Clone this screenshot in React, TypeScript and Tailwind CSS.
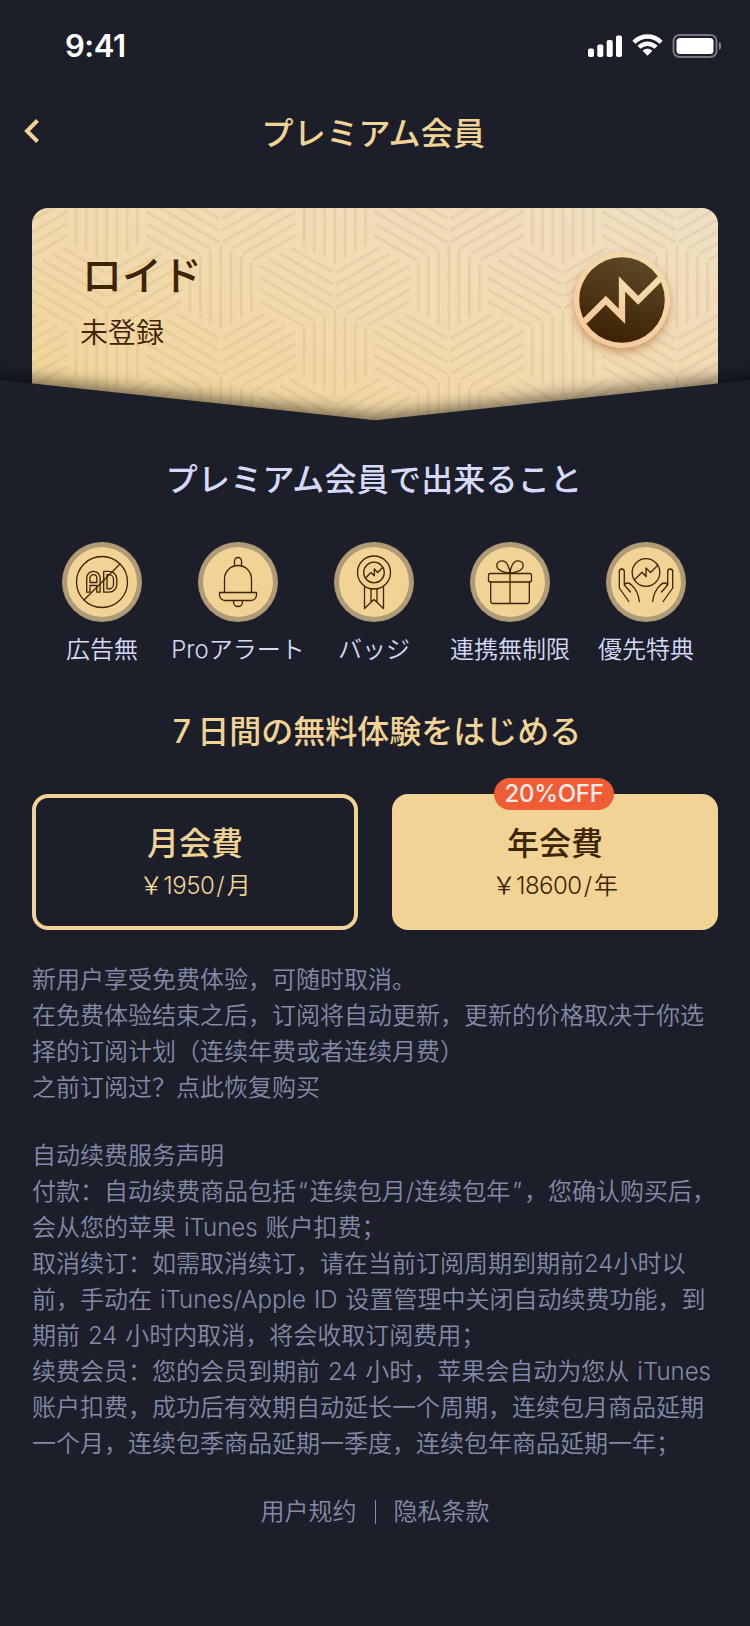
import type { ReactNode } from "react";

const INK = "#3d2402";

const COL = 114.05;
const ROW = 131.7;
const LINES = [-3, -2, -1, 0, 1, 2, 3];

function Weave() {
  const blocks: ReactNode[] = [];
  for (let c = -1; c <= 6; c++) {
    for (let r = -1; r <= 3; r++) {
      const x = 74.7 + c * COL;
      const y = -30.8 + r * ROW + (c % 2 === 0 ? 0 : ROW / 2);
      for (const angle of [0, 120, 240]) {
        for (const i of LINES) {
          const half = 42.4 - Math.abs(i) * 5.9;
          blocks.push(
            <line
              key={`${c}:${r}:${angle}:${i}`}
              x1={i * 10.23}
              x2={i * 10.23}
              y1={44 - half}
              y2={44 + half}
              transform={`translate(${x} ${y}) rotate(${angle})`}
            />,
          );
        }
      }
    }
  }
  return (
    <svg className="absolute inset-0 h-full w-full" viewBox="0 0 686 222" stroke="#cdb276" strokeOpacity="0.27" strokeWidth="2.6">
      {blocks}
    </svg>
  );
}

function StatusBar() {
  return (
    <div className="flex h-[88px] items-center justify-between pt-[2px] pr-[29px] pl-[65px]">
      <span className="pt-[2px] font-['Inter'] text-[31px] font-semibold tracking-[-0.5px] text-white">9:41</span>
      <svg className="h-[26px] w-[134px]" viewBox="587 32 134 26" fill="#fff">
        <rect x="588" y="48.500" width="6" height="8.500" rx="1.8" />
        <rect x="597.3" y="44.500" width="6" height="12.500" rx="1.8" />
        <rect x="606.7" y="40" width="6" height="17" rx="1.8" />
        <rect x="616" y="35.5" width="6" height="21.5" rx="1.8" />
        <path d="M647.500 38.800c4.400 0 8.500 1.700 11.600 4.700.2.200.6.200.8 0l2.300-2.300c.3-.3.3-.7 0-1-8.200-7.800-21.200-7.800-29.400 0-.3.300-.3.700 0 1l2.300 2.300c.2.200.6.200.8 0 3.100-3 7.200-4.700 11.600-4.700z" />
        <path d="M647.500 46.100c2.400 0 4.700.9 6.500 2.500.2.200.6.200.8 0l2.300-2.300c.3-.3.3-.7 0-1-5.400-5.100-13.800-5.100-19.200 0-.3.300-.3.700 0 1l2.300 2.300c.2.200.6.200.8 0 1.800-1.600 4.100-2.500 6.500-2.500z" />
        <path d="M652 51.300c.3-.3.3-.7 0-1-2.600-2.200-6.400-2.200-9 0-.3.300-.3.700 0 1l4 4c.3.300.7.300 1 0z" />
        <rect x="673.500" y="35" width="43" height="22" rx="6" fill="none" stroke="#fff" strokeOpacity=".4" strokeWidth="2" />
        <rect x="676.500" y="38" width="37" height="16" rx="3.500" />
        <path d="M719 42v8c1.600-.7 2.400-2.200 2.400-4s-.8-3.300-2.400-4z" opacity=".45" />
      </svg>
    </div>
  );
}

function Emblem() {
  return (
    <svg className="absolute top-[28px] right-[32px] h-[128px] w-[128px]" viewBox="0 0 128 128">
      <defs>
        <linearGradient id="ring" x1=".7" y1="0" x2=".3" y2="1">
          <stop offset="0" stopColor="#f4dcab" />
          <stop offset="1" stopColor="#f5ca9c" />
        </linearGradient>
        <linearGradient id="disc" x1=".7" y1="0" x2=".4" y2="1">
          <stop offset="0" stopColor="#5c4a26" />
          <stop offset=".45" stopColor="#4f3717" />
          <stop offset="1" stopColor="#3d2103" />
        </linearGradient>
        <filter id="drop" x="-30%" y="-30%" width="160%" height="160%" colorInterpolationFilters="sRGB">
          <feDropShadow dx="0" dy="4" stdDeviation="4" floodColor="#a05a28" floodOpacity=".5" />
        </filter>
      </defs>
      <circle cx="64" cy="64" r="48" fill="url(#ring)" filter="url(#drop)" />
      <circle cx="64" cy="64" r="42.800" fill="url(#disc)" />
      <path d="M26.500 85.500 47.800 64.300 64 80.500V48L80.200 64.300 101.800 42.700" fill="none" stroke="url(#ring)" strokeWidth="6.300" />
    </svg>
  );
}

function MemberCard() {
  return (
    <div className="relative h-[222px]">
      <div className="relative mx-8 h-[222px] overflow-hidden rounded-t-2xl bg-[linear-gradient(18deg,#f1d59b_10%,#f2dab3_60%,#f0dfc4_95%)]">
        <Weave />
        <div className="relative flex flex-col pt-[37px] pl-[48px] text-[#3d2402]">
          <span className="pl-[2px] text-[40px] leading-[56px] font-medium">ロイド</span>
          <span className="mt-[10px] text-[28px] leading-[40px] font-[350]">未登録</span>
        </div>
        <Emblem />
      </div>
      <svg className="absolute top-[142px] left-0 h-[90px] w-[750px]" viewBox="0 0 750 90">
        <defs>
          <filter id="fold" x="-5%" y="-60%" width="110%" height="220%" colorInterpolationFilters="sRGB">
            <feGaussianBlur stdDeviation="8" />
          </filter>
        </defs>
        <path d="M-20 23 0 25 368 64.400Q375 65.400 382 64.400L750 25 770 23V140H-20Z" fill="#000" fillOpacity=".52" filter="url(#fold)" />
        <path d="M0 30 368 69.400Q375 70.400 382 69.400L750 30V90H0Z" fill="#1c1f2a" />
      </svg>
    </div>
  );
}

function Glyph({ children }: { children: ReactNode }) {
  return (
    <svg className="h-20 w-20" viewBox="0 0 80 80" fill="none" stroke={INK} strokeWidth="1.300" strokeLinecap="round" strokeLinejoin="round">
      <circle cx="40" cy="40" r="40" fill="#af9b75" stroke="none" />
      <circle cx="40" cy="40" r="35" fill="#f1d396" stroke="none" />
      {children}
    </svg>
  );
}

const perks = [
  {
    label: "広告無",
    icon: (
      <>
        <circle cx="40" cy="40" r="25.500" />
        <path d="M24.700 50.200V36a6.700 6.700 0 0 1 13.400 0V50.200H34.800V43.500H28V50.200ZM28 40.500H34.800V36a3.400 3.400 0 0 0-6.800 0Z" />
        <path d="M41.700 29.300H47a7.800 7.800 0 0 1 7.800 7.800V42.400a7.800 7.800 0 0 1-7.800 7.800H41.700ZM45 32.700V46.800H47a4.500 4.500 0 0 0 4.500-4.500V37.200A4.500 4.500 0 0 0 47 32.700Z" />
        <path d="M22 58 58 22" />
      </>
    ),
  },
  {
    label: "Proアラート",
    icon: (
      <>
        <path d="M26.500 50.500V37a13.500 13.500 0 0 1 27 0V50.500" />
        <path d="M36.500 23.500V19a3.500 3.500 0 0 1 7 0V23.500" />
        <path d="M21.500 50.500H58.500V53a5.500 5.500 0 0 1-5.500 5.500H27a5.500 5.500 0 0 1-5.500-5.500Z" />
        <path d="M35.500 58.500V60a4.500 4.500 0 0 0 9 0V58.500" />
      </>
    ),
  },
  {
    label: "バッジ",
    icon: (
      <>
        <circle cx="40" cy="30.500" r="16.500" />
        <circle cx="40" cy="30.500" r="10.300" />
        <path d="M31.500 36 37 30.500 40.300 33.800V27L43.700 30.500 48.600 25.500" />
        <path d="M30.500 45V66.500L40 57.500 49.500 66.500V45M37 47V60M43 47V60" />
      </>
    ),
  },
  {
    label: "連携無制限",
    icon: (
      <>
        <rect x="18.500" y="31.500" width="43" height="8.500" rx="2" />
        <path d="M20.700 40V59a2.500 2.500 0 0 0 2.500 2.500H56.800a2.500 2.500 0 0 0 2.500-2.500V40M40 31V61.500" />
        <path d="M40 31C37 31 26.800 29 26.800 23.800 26.800 20.500 29.500 18.800 32.500 18.800 37 18.800 39.500 26 40 31ZM40 31C43 31 53.200 29 53.200 23.800 53.200 20.500 50.500 18.800 47.500 18.800 43 18.800 40.500 26 40 31Z" />
      </>
    ),
  },
  {
    label: "優先特典",
    icon: (
      <>
        <circle cx="40" cy="30.500" r="13.800" />
        <path d="M28.500 37.800 36 30.300 40 34.500V26L44.500 30.500 51.800 23.300" />
        <path d="M22.800 59.500 13.300 46V29.500a2.500 2.500 0 0 1 5 0V43L24.500 50M18.300 43C20 40 23.500 40.500 26 43.500 31 48 32.500 52 33.300 59.500" />
        <path d="M57.200 59.500 66.700 46V29.500a2.500 2.500 0 0 0-5 0V43L55.500 50M61.700 43C60 40 56.500 40.500 54 43.500 49 48 47.500 52 46.700 59.500" />
      </>
    ),
  },
];

const intro = [
  "新用户享受免费体验，可随时取消。",
  "在免费体验结束之后，订阅将自动更新，更新的价格取决于你选",
  "择的订阅计划（连续年费或者连续月费）",
  "之前订阅过？点此恢复购买",
];

const terms = [
  "自动续费服务声明",
  "付款：自动续费商品包括“连续包月/连续包年”，您确认购买后，",
  "会从您的苹果 iTunes 账户扣费；",
  "取消续订：如需取消续订，请在当前订阅周期到期前24小时以",
  "前，手动在 iTunes/Apple ID 设置管理中关闭自动续费功能，到",
  "期前 24 小时内取消，将会收取订阅费用；",
  "续费会员：您的会员到期前 24 小时，苹果会自动为您从 iTunes",
  "账户扣费，成功后有效期自动延长一个周期，连续包月商品延期",
  "一个月，连续包季商品延期一季度，连续包年商品延期一年；",
];

function Copy({ lines }: { lines: string[] }) {
  return (
    <div className="text-[24px] leading-[36px] font-[350] [word-spacing:1.200px] whitespace-nowrap text-[#858aa8]">
      {lines.map((line) => (
        <p key={line}>
          {line.split(/([“”])/).map((part, i) =>
            part === "“" || part === "”" ? (
              <span key={i} className="px-[2px]">
                {part}
              </span>
            ) : (
              part
            ),
          )}
        </p>
      ))}
    </div>
  );
}

function Price({ amount, unit }: { amount: string; unit: string }) {
  return (
    <span className="pt-[3px] font-['Inter','Noto_Sans_CJK_JP',sans-serif] text-[24px] leading-[40px] font-[350]">
      ￥<span className="font-light tracking-[-0.5px]">{amount}</span>
      <span className="px-[2px]">/</span>
      {unit}
    </span>
  );
}

export default function App() {
  return (
    <div lang="ja" className="h-[1626px] w-[750px] overflow-hidden bg-[#1c1f2a] font-['Noto_Sans_CJK_JP',sans-serif]">
      <StatusBar />
      <header className="relative flex h-[88px] items-center justify-center">
        <svg className="absolute top-[30px] left-[22px] h-[26px] w-[20px]" viewBox="0 0 20 26" fill="none" stroke="#f1d396" strokeWidth="4">
          <path d="M15.500 2.500 5 13 15.500 23.500" />
        </svg>
        <h1 className="pr-[3px] pb-[2px] text-[32px] leading-[44px] font-medium tracking-[0.3px] text-[#f1d396]">プレミアム会員</h1>
      </header>

      <div className="pt-8">
        <MemberCard />
      </div>

      <h2 className="mt-[25px] pr-[2px] text-center text-[32px] leading-[44px] font-medium tracking-[0.2px] text-[#d6d9f8]">プレミアム会員で出来ること</h2>

      <div className="mt-[43px] flex justify-center pr-[2px]">
        {perks.map((perk) => (
          <div key={perk.label} className="flex w-[136px] flex-col items-center whitespace-nowrap">
            <Glyph>{perk.icon}</Glyph>
            <span className="mt-[11px] font-['Inter','Noto_Sans_CJK_JP',sans-serif] text-[24px] leading-[34px] font-[350] text-[#d6d9f8]">{perk.label}</span>
          </div>
        ))}
      </div>

      <h2 className="mt-[40px] h-[44px] pr-[2px] text-center text-[32px] leading-[44px] font-medium text-[#f1d396]">
        <span className="px-[6px] font-['Inter'] leading-none">7</span>日間の無料体験をはじめる
      </h2>

      <div className="mt-[43px] flex justify-between px-8">
        <button className="flex h-[136px] w-[326px] flex-col items-center rounded-2xl border-4 border-[#f1d396] pt-[21px] text-[#f1d396]">
          <span className="text-[32px] leading-[44px] font-medium">月会費</span>
          <Price amount="1950" unit="月" />
        </button>
        <button className="relative flex h-[136px] w-[326px] flex-col items-center rounded-2xl bg-[#f1d396] pt-[25px] text-[#3d2402]">
          <span className="absolute -top-4 left-[102px] flex h-8 w-[120px] items-center justify-center rounded-full bg-[#f05d35] font-['Inter'] text-[24px] font-medium tracking-[-0.3px] text-[#f0ecec]">
            20%OFF
          </span>
          <span className="text-[32px] leading-[44px] font-medium">年会費</span>
          <Price amount="18600" unit="年" />
        </button>
      </div>

      <div lang="zh-CN" className="flex flex-col gap-8 px-8 pt-[32px] font-['Inter','Noto_Sans_CJK_SC',sans-serif]">
        <Copy lines={intro} />
        <Copy lines={terms} />
        <footer className="flex items-center justify-center gap-[18px] text-[24px] leading-[36px] font-[350] text-[#858aa8]">
          <span>用户规约</span>
          <span className="h-6 w-px bg-[#858aa8]" />
          <span>隐私条款</span>
        </footer>
      </div>
    </div>
  );
}
